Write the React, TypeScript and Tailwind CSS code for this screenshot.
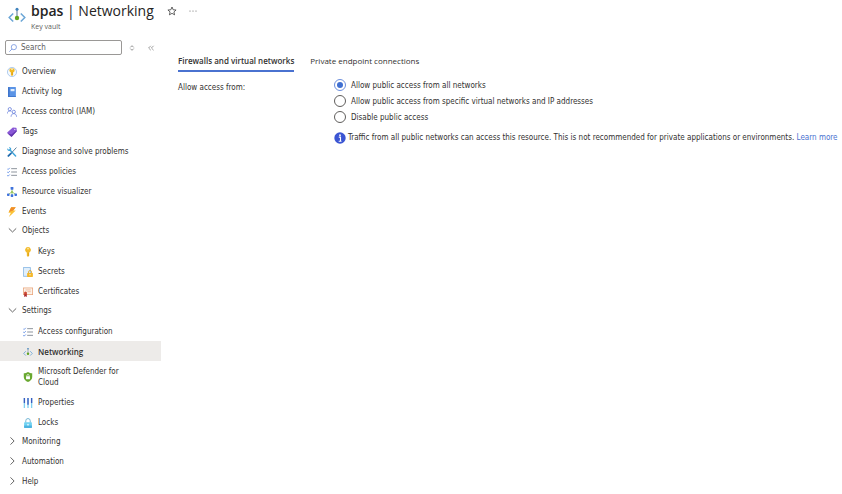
import { useState, type ReactNode } from 'react';

type IconProps = { className?: string };

type Item = {
	label: string;
	icon: (props: IconProps) => ReactNode;
};

type Group = {
	label: string;
	items: Item[];
};

const NetworkIcon = ({ className = 'size-2.5' }: IconProps) => (
	<svg viewBox="0 0 18 18" className={className} fill="none" aria-hidden="true">
		<path d="M5.2 7.5 1.2 11.5l4 4M12.8 7.5l4 4-4 4" stroke="#6ba6d6" strokeWidth="1.5" />
		<path d="M9 3v8" stroke="#7f95ad" strokeWidth="1.3" />
		<circle cx="9" cy="3.2" r="1.5" fill="#3f83bd" />
		<circle cx="9" cy="12" r="2.2" fill="#62a420" />
	</svg>
);

const OverviewIcon = () => (
	<svg viewBox="0 0 18 18" className="size-2.5" aria-hidden="true">
		<circle cx="9" cy="9" r="8.2" fill="#f4f9fe" stroke="#8db4e4" strokeWidth="1.2" />
		<path d="M6 2.6h6l1.6 1.7v3.4L11 9.8v4.4L9 16.2l-2-2V9.8L4.4 7.7V4.3z" fill="#f3b91f" />
		<path d="M9.5 9.5v5" stroke="#d08e12" />
		<path d="M7.5 4.6h3" stroke="#fff" strokeWidth="1.2" />
	</svg>
);

const ActivityIcon = () => (
	<svg viewBox="0 0 18 18" className="size-2.5" aria-hidden="true">
		<rect x="2" y="0" width="14" height="18" rx="1" fill="#5b94e6" />
		<path d="M2 1a1 1 0 0 1 1-1h1.5v18H3a1 1 0 0 1-1-1z" fill="#3a70c8" />
		<rect x="6.5" y="3.6" width="7" height="4" fill="#e2eefc" />
		<path d="M2.5 17.2H16" stroke="#3a70c8" strokeWidth="1.4" />
	</svg>
);

const AccessControlIcon = () => (
	<svg viewBox="0 0 18 18" className="size-2.5" fill="none" stroke="#6b82dc" strokeWidth="1.5" aria-hidden="true">
		<circle cx="5" cy="3.9" r="2.9" />
		<path d="M.5 11.8C.5 8.8 2.4 7 5 7c1.2 0 2.2.4 2.9 1.1" />
		<circle cx="12.2" cy="8.7" r="2.9" />
		<path d="M7.3 17.5c.2-3.6 2-5.6 4.9-5.6s4.8 2 5 5.6" />
	</svg>
);

const TagIcon = () => (
	<svg viewBox="0 0 18 18" className="size-2.5" aria-hidden="true">
		<path d="m10.500.8 5.800.4a1 1 0 0 1 .9.9l.4 5.600-8.700 9.300a1.200 1.200 0 0 1-1.700 0L.8 11.200a1.200 1.200 0 0 1 0-1.700z" fill="#8a58d6" />
		<path d="m.8 11.200 6.400 5.800a1.200 1.200 0 0 0 1.700 0l8.700-9.300-.1-1.700-9.700 7.600z" fill="#6337ae" />
		<circle cx="14" cy="4.3" r="1.2" fill="#e7dcfa" />
	</svg>
);

const DiagnoseIcon = () => (
	<svg viewBox="0 0 18 18" className="size-2.5" fill="none" strokeLinecap="round" aria-hidden="true">
		<path d="m5 5 10.5 11" stroke="#3fa5db" strokeWidth="2.6" />
		<path d="M1.3 3.6C1.5 6.3 5 7.2 6.3 5 7 3.4 6.3 1.8 4.8 1.2" stroke="#3fa5db" strokeWidth="2" />
		<path d="m16.5 1.5-8 8.7" stroke="#557a98" strokeWidth="1.7" />
		<path d="m7.2 11.4-4.7 4.7" stroke="#1e69ad" strokeWidth="3.2" />
	</svg>
);

const ChecklistIcon = () => (
	<svg viewBox="0 0 18 18" className="size-2.5" fill="none" aria-hidden="true">
		<path d="M7.5 3H18M7.5 9H18M7.5 15H18" stroke="#868d97" strokeWidth="1.7" />
		<path d="M.5 3 2 4.5l3-3M.5 9 2 10.5l3-3M.5 15 2 16.5l3-3" stroke="#5a8ae4" strokeWidth="1.6" />
	</svg>
);

const VisualizerIcon = () => (
	<svg viewBox="0 0 18 18" className="size-2.5" aria-hidden="true">
		<path d="M9 4v10M9 8.5 3 13M9 8.5l6 4.5" stroke="#93c255" strokeWidth="1.5" fill="none" />
		<rect x="6.5" y="0" width="5" height="5" rx=".8" fill="#3f73dd" />
		<rect x="0" y="11.5" width="4.6" height="4.6" rx="1.2" fill="#3f73dd" />
		<rect x="6.7" y="13.2" width="4.6" height="4.6" rx="1.2" fill="#3f73dd" />
		<rect x="13.4" y="11.5" width="4.6" height="4.6" rx="1.2" fill="#3f73dd" />
		<circle cx="9" cy="9" r="1.7" fill="#93c255" />
	</svg>
);

const EventsIcon = () => (
	<svg viewBox="0 0 18 18" className="size-2.5" aria-hidden="true">
		<path d="M7.5.3h8.2l-4.5 6h4.6L3.4 18l3.5-7.8H2.5z" fill="#fbc234" />
		<path d="M7.5.3h8.2l-4.5 6-4 1.500-3.700 1z" fill="#ef8c2a" />
	</svg>
);

const KeyIcon = () => (
	<svg viewBox="0 0 18 18" className="size-2.5" aria-hidden="true">
		<path d="M9 0a5.2 5.2 0 0 1 2.6 9.7l-.5.3v5.8L9 18l-2.1-2.2V10l-.5-.3A5.2 5.2 0 0 1 9 0z" fill="#f3bb2b" />
		<path d="M9.7 10.5V16" stroke="#cf9317" strokeWidth="1.1" />
		<circle cx="9" cy="3.3" r="1.4" fill="#fff3cf" />
	</svg>
);

const SecretsIcon = () => (
	<svg viewBox="0 0 18 18" className="size-2.5" aria-hidden="true">
		<path d="M.7.8h12.6v16H.7z" fill="#e1effb" stroke="#7bb0e2" strokeWidth="1.4" />
		<path d="M10 11V9a2.7 2.7 0 0 1 5.4 0v2" fill="none" stroke="#dba32a" strokeWidth="1.5" />
		<rect x="7.4" y="10.6" width="10.4" height="7.2" rx=".8" fill="#f4b72a" />
		<circle cx="12.6" cy="14" r="1.2" fill="#fff3cf" />
	</svg>
);

const CertificateIcon = () => (
	<svg viewBox="0 0 18 18" className="size-2.5" aria-hidden="true">
		<rect x=".7" y="1.7" width="16.6" height="12" fill="#fdf3ea" stroke="#e8a37a" strokeWidth="1.4" />
		<path d="M4.5 5.3H14M8 8.5h6" stroke="#e8a37a" strokeWidth="1.2" />
		<path d="M2.2 11.5V18l2.3-1.5L6.8 18v-6.500z" fill="#a8262a" />
		<circle cx="4.5" cy="10.8" r="2.7" fill="#cf4a35" />
	</svg>
);

const DefenderIcon = () => (
	<svg viewBox="0 0 18 18" className="size-2.5" aria-hidden="true">
		<path d="M9 0c2.4 1.7 4.8 2.2 7.6 2.2v6.6c0 4.4-3.4 7.2-7.6 9.2-4.2-2-7.6-4.8-7.6-9.2V2.2C4.2 2.2 6.6 1.7 9 0z" fill="#69a830" />
		<path d="M7 8V6.5a2 2 0 0 1 4 0V8" fill="none" stroke="#fff" strokeWidth="1.3" />
		<rect x="5.5" y="7.7" width="7" height="5.2" rx=".6" fill="#fff" />
	</svg>
);

const PropertiesIcon = () => (
	<svg viewBox="0 0 18 18" className="size-2.5" fill="none" strokeWidth="2.4" aria-hidden="true">
		<path d="M2.5 0v18M9 0v18M15.5 0v18" stroke="#7fd0f0" />
		<path d="M2.5 0v9M9 0v12M15.5 0v9" stroke="#3b5cc0" />
	</svg>
);

const LockIcon = () => (
	<svg viewBox="0 0 18 18" className="size-2.5" aria-hidden="true">
		<path d="M5 8.5V5a4 4 0 0 1 8 0v3.5" fill="none" stroke="#74b6d4" strokeWidth="1.8" />
		<rect x="2" y="7.8" width="14" height="10" rx="1" fill="#70d2f2" />
		<path d="M2 13.5h14v3.3a1 1 0 0 1-1 1H3a1 1 0 0 1-1-1z" fill="#4db3e0" />
		<circle cx="9" cy="12" r="1.5" fill="#e9f9ff" />
	</svg>
);

const Chevron = ({ open }: { open: boolean }) => (
	<svg viewBox="0 0 12 12" className="size-3 shrink-0" fill="none" stroke="#666" aria-hidden="true">
		<path d={open ? 'M2.8 4.4 6.5 8l3.7-3.6' : 'M4.5 2.4 8.1 6 4.500 9.600'} />
	</svg>
);

const topItems: Item[] = [
	{ label: 'Overview', icon: OverviewIcon },
	{ label: 'Activity log', icon: ActivityIcon },
	{ label: 'Access control (IAM)', icon: AccessControlIcon },
	{ label: 'Tags', icon: TagIcon },
	{ label: 'Diagnose and solve problems', icon: DiagnoseIcon },
	{ label: 'Access policies', icon: ChecklistIcon },
	{ label: 'Resource visualizer', icon: VisualizerIcon },
	{ label: 'Events', icon: EventsIcon }
];

const groups: Group[] = [
	{
		label: 'Objects',
		items: [
			{ label: 'Keys', icon: KeyIcon },
			{ label: 'Secrets', icon: SecretsIcon },
			{ label: 'Certificates', icon: CertificateIcon }
		]
	},
	{
		label: 'Settings',
		items: [
			{ label: 'Access configuration', icon: ChecklistIcon },
			{ label: 'Networking', icon: NetworkIcon },
			{ label: 'Microsoft Defender for Cloud', icon: DefenderIcon },
			{ label: 'Properties', icon: PropertiesIcon },
			{ label: 'Locks', icon: LockIcon }
		]
	},
	{ label: 'Monitoring', items: [] },
	{ label: 'Automation', items: [] },
	{ label: 'Help', items: [] }
];

const accessOptions = [
	'Allow public access from all networks',
	'Allow public access from specific virtual networks and IP addresses',
	'Disable public access'
];

const NavItem = ({ item, nested, active }: { item: Item; nested?: boolean; active?: boolean }) => {
	const Icon = item.icon;
	return (
		<li>
			<a
				href="#"
				aria-current={active ? 'page' : undefined}
				className={`flex items-center gap-[5px] pt-[5px] pb-1 ${nested ? 'pr-8 pl-[23px]' : 'pr-2 pl-[7px]'} ${
					active ? "bg-[#edebe9] font-['Open_Sans'] font-semibold" : 'hover:bg-[#f3f2f1]'
				}`}
			>
				<span className="shrink-0">
					<Icon />
				</span>
				{item.label}
			</a>
		</li>
	);
};

const Sidebar = () => {
	const [openGroups, setOpenGroups] = useState<string[]>(['Objects', 'Settings']);

	const toggle = (label: string) => {
		setOpenGroups((prev) => (prev.includes(label) ? prev.filter((g) => g !== label) : [...prev, label]));
	};

	return (
		<aside className="w-[161px] shrink-0">
			<div className="flex items-center pb-1.5 pl-[5px]">
				<label className="flex h-[15px] w-[117px] items-center gap-1 rounded-xs border border-[#9a9896] px-[3px]">
					<svg viewBox="0 0 12 12" className="size-2 shrink-0" fill="none" stroke="#7c9ae0" aria-hidden="true">
						<circle cx="7.3" cy="4.7" r="3.9" strokeWidth="1.3" />
						<path d="m4.5 7.5-4 4" strokeWidth="1.3" />
					</svg>
					<input
						type="text"
						aria-label="Search"
						placeholder="Search"
						className="w-full min-w-0 outline-none placeholder:text-[#605e5c]"
					/>
				</label>
				<button type="button" aria-label="Expand or collapse all" className="ml-1.5 text-[#888]">
					<svg viewBox="0 0 8 8" className="size-2" fill="none" stroke="currentColor" aria-hidden="true">
						<path d="M2.3 3.4 4 1.7l1.7 1.7M2.3 4.6 4 6.3l1.7-1.7" strokeWidth=".9" />
					</svg>
				</button>
				<button type="button" aria-label="Collapse menu" className="ml-[11px] text-[#888]">
					<svg viewBox="0 0 8 8" className="size-2" fill="none" stroke="currentColor" aria-hidden="true">
						<path d="M3.8 1.8 1.6 4l2.2 2.2M6.6 1.8 4.4 4l2.2 2.2" strokeWidth=".8" />
					</svg>
				</button>
			</div>
			<nav>
				<ul>
					{topItems.map((item) => (
						<NavItem key={item.label} item={item} />
					))}
					{groups.map((group) => {
						const open = openGroups.includes(group.label);
						return (
							<li key={group.label}>
								<button
									type="button"
									aria-expanded={open}
									onClick={() => toggle(group.label)}
									className="flex h-5 w-full items-center gap-1 pb-0.5 pl-1.5 text-left"
								>
									<Chevron open={open} />
									{group.label}
								</button>
								{open && (
									<ul>
										{group.items.map((item) => (
											<NavItem key={item.label} item={item} nested active={item.label === 'Networking'} />
										))}
									</ul>
								)}
							</li>
						);
					})}
				</ul>
			</nav>
		</aside>
	);
};

const App = () => {
	const [access, setAccess] = useState(accessOptions[0]);

	return (
		<div className="bg-white font-['DejaVu_Sans_Condensed','Open_Sans',sans-serif] text-[8px] leading-[11px] text-[#323130]">
			<header className="flex items-start gap-[5px] pb-[9px] pl-2">
				<NetworkIcon className="mt-1.5 size-[18px]" />
				<div>
					<h1 className="font-['Open_Sans'] text-[14px] leading-[22px] text-[#252423]">
						<span className="font-semibold">bpas</span> | Networking
					</h1>
					<p className="font-['Open_Sans'] text-[7px] leading-[9px] text-[#605e5c]">Key vault</p>
				</div>
				<div className="ml-2 flex h-[22px] items-center gap-3">
					<button type="button" aria-label="Add to favorites">
						<svg viewBox="0 0 12 12" className="size-2.5" fill="none" stroke="#444" aria-hidden="true">
							<path d="m6 1.2 1.4 3.3 3.5.3-2.6 2.3.8 3.5L6 8.8l-3.1 1.8.8-3.500L1.1 4.8l3.5-.3z" />
						</svg>
					</button>
					<button type="button" aria-label="More options">
						<svg viewBox="0 0 8 8" className="size-2" fill="#666" aria-hidden="true">
							<circle cx="1" cy="4" r=".6" />
							<circle cx="4" cy="4" r=".6" />
							<circle cx="7" cy="4" r=".6" />
						</svg>
					</button>
				</div>
			</header>
			<div className="flex">
				<Sidebar />
				<main className="min-w-0 flex-1 pt-[15px] pl-[17px]">
					<div role="tablist" className="flex gap-4 font-['Open_Sans']">
						<button type="button" role="tab" aria-selected="true" className="border-b-2 border-[#4a72d0] pb-1 font-semibold">
							Firewalls and virtual networks
						</button>
						<button type="button" role="tab" aria-selected="false" className="border-b-2 border-transparent pb-1">
							Private endpoint connections
						</button>
					</div>
					<div className="flex pt-[7px]">
						<div id="access-label" className="w-[156px] shrink-0 pt-[3px]">
							Allow access from:
						</div>
						<div>
							<div role="radiogroup" aria-labelledby="access-label" className="flex flex-col gap-1">
								{accessOptions.map((option) => (
									<label key={option} className="flex items-center gap-[5px]">
										<input
											type="radio"
											name="access"
											checked={access === option}
											onChange={() => setAccess(option)}
											className="size-3 appearance-none rounded-full border border-[#605e5c] checked:border-[#6d8fdc] checked:bg-[#3f6fd1] checked:bg-clip-content checked:p-0.5"
										/>
										{option}
									</label>
								))}
							</div>
							<div className="flex items-start gap-0.5 pt-[9px]">
								<svg viewBox="0 0 12 12" className="size-3 shrink-0" aria-hidden="true">
									<circle cx="6" cy="6" r="5.7" fill="#3b55d3" />
									<circle cx="6" cy="3.2" r=".9" fill="#fff" />
									<path d="M4.8 5.1h1.700v4M4.700 9.200h2.800" stroke="#fff" strokeWidth="1.1" fill="none" />
								</svg>
								<p>
									Traffic from all public networks can access this resource. This is not recommended for private
									applications or environments.{' '}
									<a href="#" className="text-[#4a72d0]">
										Learn more
									</a>
								</p>
							</div>
						</div>
					</div>
				</main>
			</div>
		</div>
	);
};

export default App;
